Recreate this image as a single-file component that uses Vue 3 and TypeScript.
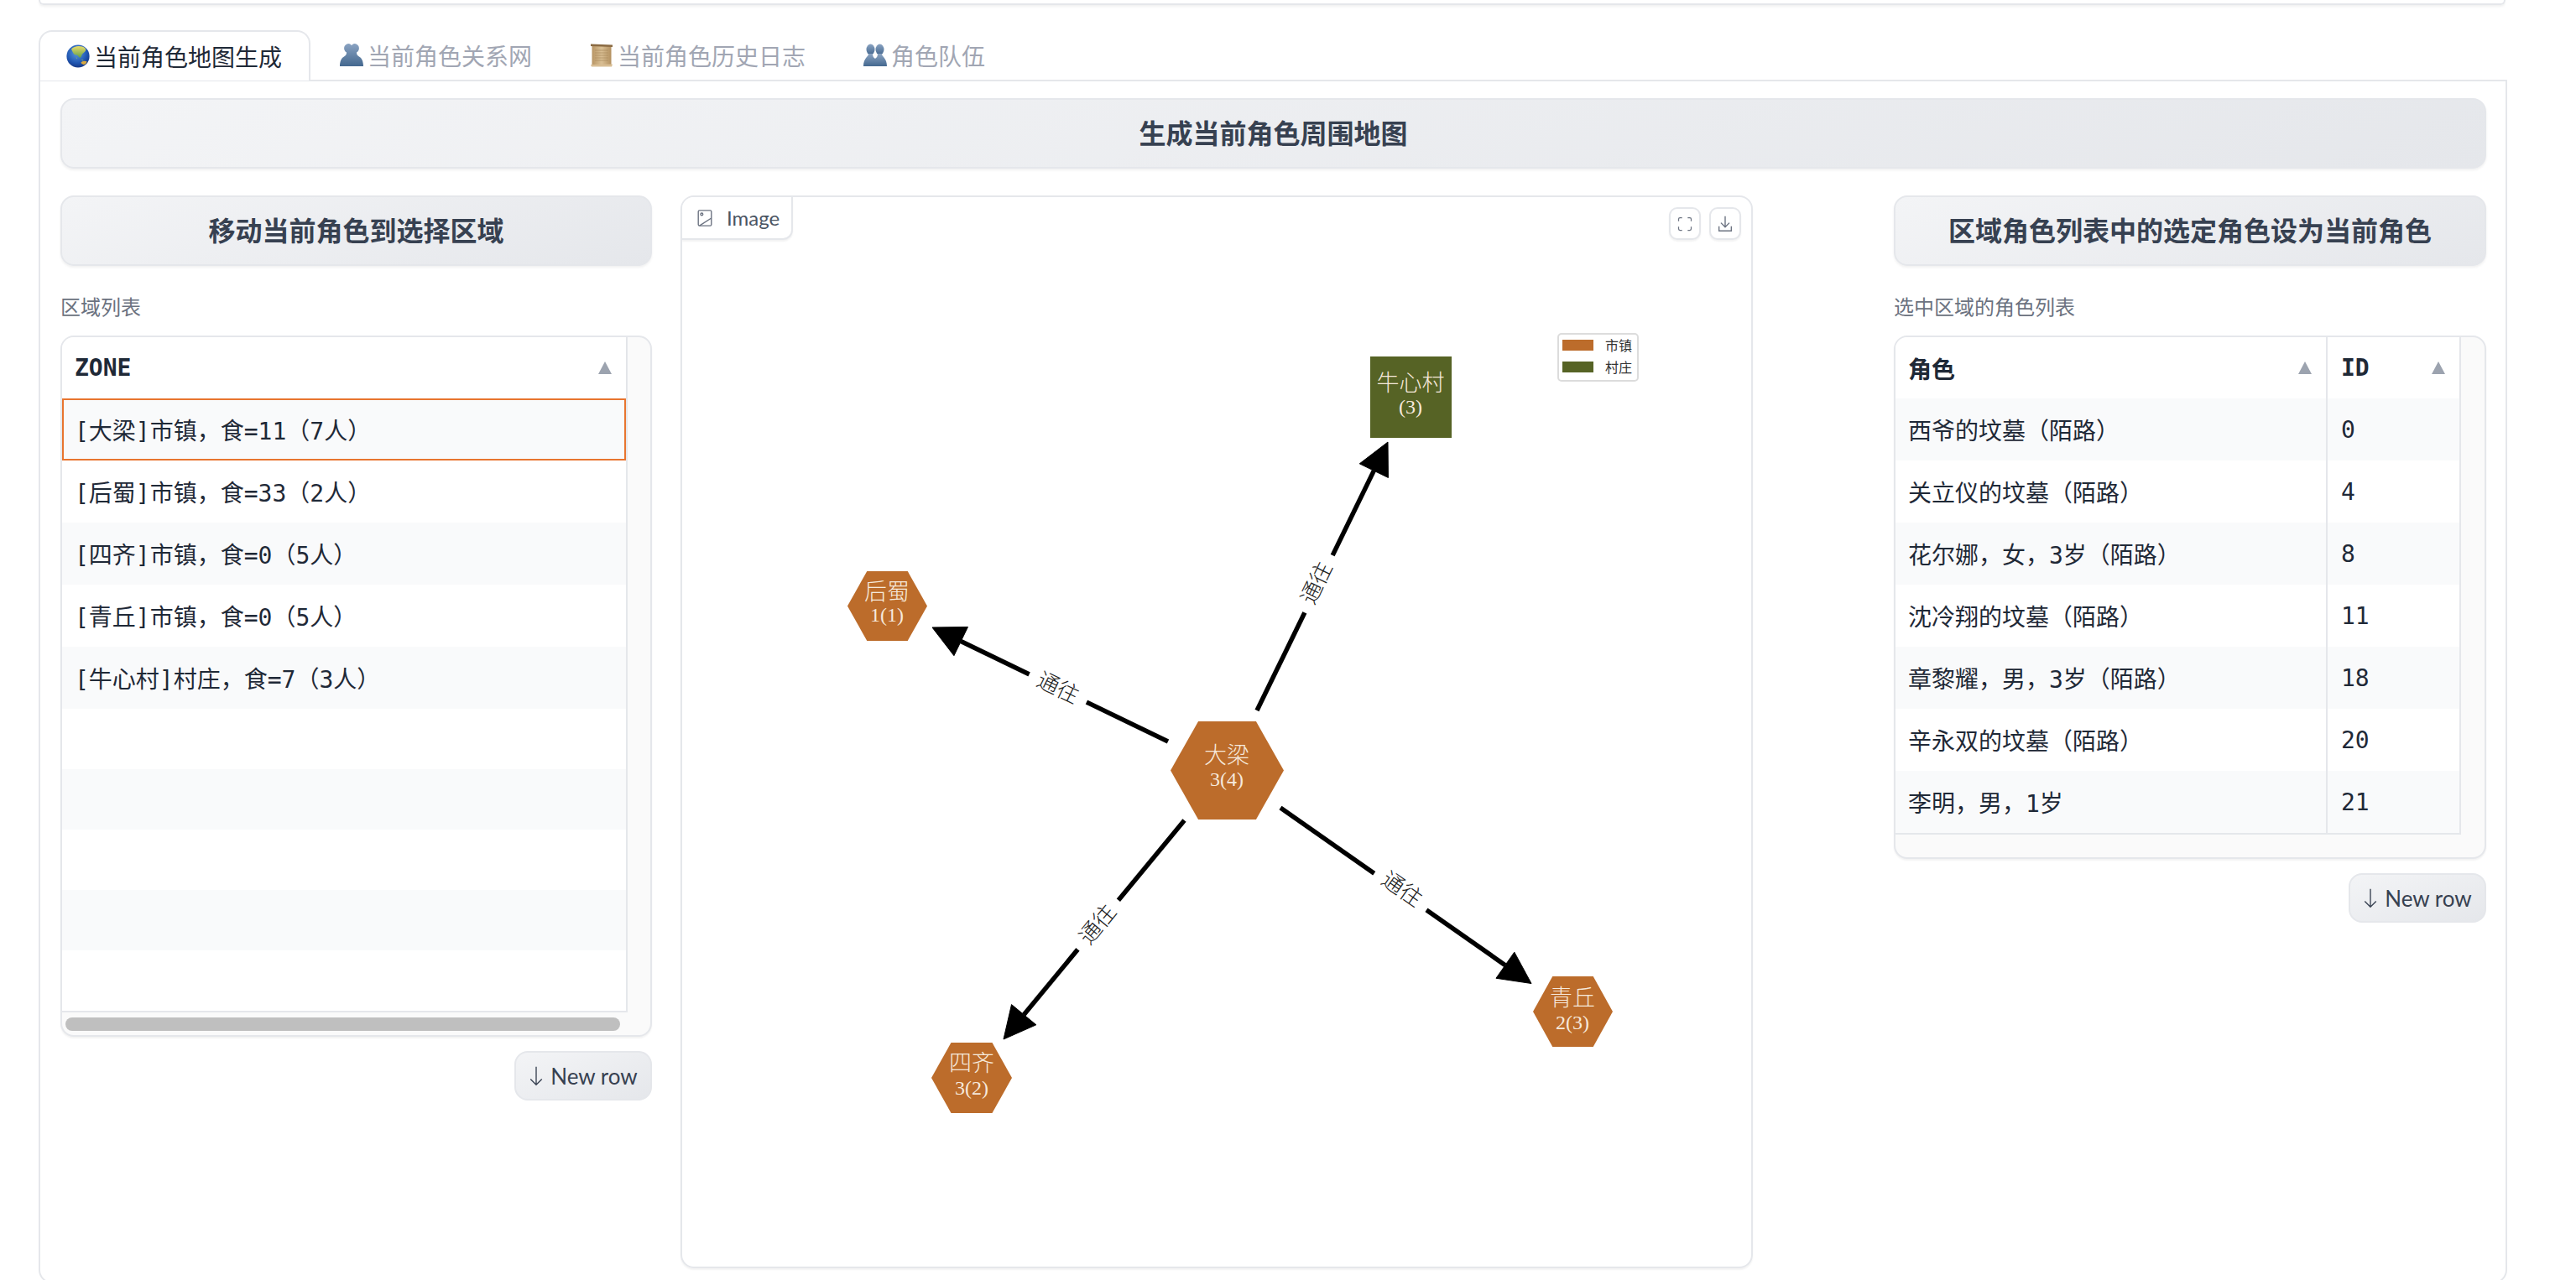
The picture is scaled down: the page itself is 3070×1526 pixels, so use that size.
<template>
  <div class="page">
    <div class="top-strip"></div>

    <div class="tabs">
      <div class="tab active">
        <svg class="emoji" viewBox="0 0 28 28">
          <defs>
            <radialGradient id="sea" cx="45%" cy="35%" r="70%">
              <stop offset="0" stop-color="#5b9be0" />
              <stop offset="0.65" stop-color="#1f55b0" />
              <stop offset="1" stop-color="#12307c" />
            </radialGradient>
            <linearGradient id="land" x1="0" y1="0" x2="0" y2="1">
              <stop offset="0" stop-color="#e8dc6a" />
              <stop offset="1" stop-color="#5f9e4a" />
            </linearGradient>
          </defs>
          <circle cx="14" cy="14" r="13.6" fill="url(#sea)" />
          <path d="M6 5.500C9.500 1.500 18 0.800 22.500 4.500C24.500 7 22 9 20 10.500C18 12 18.500 14.500 16.500 16C14.500 15 14 12.500 11.500 12.500C9 12.500 7.500 9 6 5.500Z" fill="url(#land)" />
          <path d="M17 17.500l2 1 1.500-.5-1 1.500zM11.500 14.500l1.500 2-.5 1z" fill="#8fb65a" />
          <path d="M17.500 21.500C19 19.500 23 19 24.500 20.500C24 22.500 22.500 24 20.500 24C19 23.500 18 23 17.500 21.500Z" fill="#d9a93f" />
        </svg>
        <span>当前角色地图生成</span>
      </div>
      <div class="tab">
        <svg class="emoji" viewBox="0 0 28 28">
          <defs>
            <linearGradient id="bust" x1="0" y1="0" x2="0" y2="1">
              <stop offset="0" stop-color="#8aa3c2" />
              <stop offset="1" stop-color="#44688f" />
            </linearGradient>
          </defs>
          <path d="M8 10.500a5 5.500 0 1 1 6-1.500a5 5.500 0 1 1 6 1.500C20 13 21 14 23 15.500C26 17 28 21 28 27H0C0 21 2 17 5 15.500C7 14 8 13 8 10.500Z" fill="url(#bust)" />
        </svg>
        <span>当前角色关系网</span>
      </div>
      <div class="tab">
        <svg class="emoji" viewBox="0 0 28 28">
          <defs>
            <linearGradient id="paper" x1="0" y1="0" x2="1" y2="0">
              <stop offset="0" stop-color="#b89564" />
              <stop offset="0.5" stop-color="#d9bf94" />
              <stop offset="1" stop-color="#b3905f" />
            </linearGradient>
          </defs>
          <rect x="2.500" y="2" width="23" height="24" fill="url(#paper)" />
          <path d="M1 0.500L27 1.500V4L1 3Z" fill="#8a6a42" />
          <path d="M1 25L27 24.500L26 27.500H2Z" fill="#d8bd93" />
          <path d="M6 8h16M6 11h16M6 14h16M6 17h16M6 20h16" stroke="#a98a5c" stroke-width="0.700" fill="none" />
        </svg>
        <span>当前角色历史日志</span>
      </div>
      <div class="tab">
        <svg class="emoji" viewBox="0 0 28 28">
          <ellipse cx="8.500" cy="7" rx="5" ry="6.500" fill="url(#bust)" />
          <ellipse cx="19.500" cy="7" rx="5" ry="6.500" fill="url(#bust)" />
          <path d="M6 12H11C11 16 13 17 14 18C15 17 17 16 17 12H22C22 16 28 17 28 27H0C0 17 6 16 6 12Z" fill="url(#bust)" />
        </svg>
        <span>角色队伍</span>
      </div>
    </div>

    <div class="panel">
      <button class="big-btn">生成当前角色周围地图</button>

      <div class="columns">
        <div class="col">
          <button class="big-btn">移动当前角色到选择区域</button>
          <div class="field-label">区域列表</div>
          <div class="table-box">
            <div class="sheet">
              <div class="row head">
                <div class="cell"><b>ZONE</b><i class="sort"></i></div>
              </div>
              <div
                v-for="(z, i) in zones"
                :key="i"
                class="row"
                :class="{ empty: !z, selected: i === 0 }"
              >
                <div class="cell">{{ z }}</div>
              </div>
            </div>
            <div class="track"><div class="thumb"></div></div>
          </div>
          <button class="new-row"><span class="arrow">
            <svg viewBox="0 0 20 30" width="18" height="27"><path d="M10 3V27M2.500 19.500L10 27L17.500 19.500" fill="none" stroke="#374151" stroke-width="1.500" /></svg>
          </span>New row</button>
        </div>

        <div class="image-box">
          <div class="image-label">
            <svg viewBox="0 0 24 24" width="22" height="22" fill="none" stroke="#6b7280" stroke-width="1.500">
              <rect x="3.500" y="2" width="17" height="20" rx="1.500" />
              <circle cx="8" cy="7" r="1.500" />
              <path d="M20.500 12L5 22" />
            </svg>
            Image
          </div>
          <div class="image-tools">
            <div class="tool">
              <svg viewBox="0 0 24 24" width="20" height="20" fill="none" stroke="#6b7280" stroke-width="1.500">
                <path d="M8 3H5a2 2 0 0 0-2 2v3m18 0V5a2 2 0 0 0-2-2h-3m0 18h3a2 2 0 0 0 2-2v-3M3 16v3a2 2 0 0 0 2 2h3" />
              </svg>
            </div>
            <div class="tool">
              <svg viewBox="0 0 24 24" width="22" height="22" fill="none" stroke="#6b7280" stroke-width="1.500">
                <path d="M12 2V16M6.500 10.500L12 16L17.500 10.500M4 15V21H20V15" />
              </svg>
            </div>
          </div>

          <svg class="map" viewBox="813 235 1274 1275" width="1274" height="1275">
            <g v-for="(e, i) in drawnEdges" :key="'e' + i">
              <line :x1="e.x1" :y1="e.y1" :x2="e.x2" :y2="e.y2" stroke="#000" stroke-width="5.5" />
              <polygon :points="e.head" fill="#000" stroke="#000" stroke-width="1" stroke-linejoin="round" />
              <g :transform="`translate(${e.lx} ${e.ly}) rotate(${e.angle})`">
                <rect x="-38" y="-17" width="76" height="34" fill="#fff" />
                <text class="edge-text" y="9" text-anchor="middle">通往</text>
              </g>
            </g>

            <g v-for="n in nodes" :key="n.name">
              <polygon :points="n.shape" :fill="n.fill" />
              <text class="node-name" :x="n.x" :y="n.y1 + 9" text-anchor="middle">{{ n.name }}</text>
              <text class="node-num" :x="n.x" :y="n.y2 + 7" text-anchor="middle">{{ n.num }}</text>
            </g>
          </svg>

          <div class="legend">
            <div class="legend-row"><i class="swatch town"></i>市镇</div>
            <div class="legend-row"><i class="swatch village"></i>村庄</div>
          </div>
        </div>

        <div class="col right">
          <button class="big-btn">区域角色列表中的选定角色设为当前角色</button>
          <div class="field-label">选中区域的角色列表</div>
          <div class="table-box">
            <div class="sheet">
              <div class="row head two">
                <div class="cell"><b>角色</b><i class="sort"></i></div>
                <div class="cell"><b>ID</b><i class="sort"></i></div>
              </div>
              <div v-for="p in people" :key="p.id" class="row two">
                <div class="cell">{{ p.name }}</div>
                <div class="cell">{{ p.id }}</div>
              </div>
            </div>
            <div class="track"></div>
          </div>
          <button class="new-row"><span class="arrow">
            <svg viewBox="0 0 20 30" width="18" height="27"><path d="M10 3V27M2.500 19.500L10 27L17.500 19.500" fill="none" stroke="#374151" stroke-width="1.500" /></svg>
          </span>New row</button>
        </div>
      </div>
    </div>
  </div>
</template>

<script setup lang="ts">
const zones = [
  "[大梁]市镇，食=11（7人）",
  "[后蜀]市镇，食=33（2人）",
  "[四齐]市镇，食=0（5人）",
  "[青丘]市镇，食=0（5人）",
  "[牛心村]村庄，食=7（3人）",
  "",
  "",
  "",
  "",
  "",
];

const people = [
  { name: "西爷的坟墓（陌路）", id: 0 },
  { name: "关立仪的坟墓（陌路）", id: 4 },
  { name: "花尔娜，女，3岁（陌路）", id: 8 },
  { name: "沈冷翔的坟墓（陌路）", id: 11 },
  { name: "章黎耀，男，3岁（陌路）", id: 18 },
  { name: "辛永双的坟墓（陌路）", id: 20 },
  { name: "李明，男，1岁", id: 21 },
];

const TOWN = "#bc6c2b";
const VILLAGE = "#566325";

// 六边形：中心、半宽、半高
const hexPoints = (cx: number, cy: number, w: number, h: number) => {
  const t = w * 0.51;
  return [
    [cx - w, cy],
    [cx - t, cy - h],
    [cx + t, cy - h],
    [cx + w, cy],
    [cx + t, cy + h],
    [cx - t, cy + h],
  ]
    .map((p) => p.join(","))
    .join(" ");
};

const nodes = [
  { name: "大梁", num: "3(4)", x: 1462, y1: 901, y2: 930, fill: TOWN, shape: hexPoints(1462.5, 918.5, 67.5, 58.5) },
  { name: "后蜀", num: "1(1)", x: 1057, y1: 706, y2: 734, fill: TOWN, shape: hexPoints(1057.5, 722.5, 47.5, 41.5) },
  { name: "四齐", num: "3(2)", x: 1158, y1: 1268, y2: 1298, fill: TOWN, shape: hexPoints(1158, 1285, 48, 42) },
  { name: "青丘", num: "2(3)", x: 1874, y1: 1190, y2: 1220, fill: TOWN, shape: hexPoints(1874.5, 1206, 47.5, 42) },
  { name: "牛心村", num: "(3)", x: 1681, y1: 457, y2: 486, fill: VILLAGE, shape: "1633,425 1730,425 1730,522 1633,522" },
];

const edges = [
  { from: [1498, 847], tip: [1654, 527], label: [1569, 695], angle: -64 },
  { from: [1392, 884], tip: [1111, 748], label: [1261, 820], angle: 25.8 },
  { from: [1411.5, 978], tip: [1196, 1239], label: [1308, 1102], angle: -50.5 },
  { from: [1526, 963], tip: [1825, 1172.5], label: [1671, 1060], angle: 35 },
];

const drawnEdges = edges.map((e) => {
  const dx = e.tip[0] - e.from[0];
  const dy = e.tip[1] - e.from[1];
  const len = Math.hypot(dx, dy);
  const ux = dx / len;
  const uy = dy / len;
  const bx = e.tip[0] - ux * 38;
  const by = e.tip[1] - uy * 38;
  const head = [
    [e.tip[0], e.tip[1]],
    [bx - uy * 19, by + ux * 19],
    [bx + uy * 19, by - ux * 19],
  ]
    .map((p) => p.join(","))
    .join(" ");
  return {
    x1: e.from[0],
    y1: e.from[1],
    x2: bx,
    y2: by,
    head,
    lx: e.label[0],
    ly: e.label[1],
    angle: e.angle,
  };
});
</script>

<style scoped>
.page {
  width: 3070px;
  height: 1526px;
  overflow: hidden;
  padding: 0 82px 0 46px;
  box-sizing: border-box;
  font-family: "Noto Sans CJK SC", "Noto Sans", sans-serif;
  color: #1f2937;
}
.top-strip {
  height: 4px;
  margin-right: 2px;
  border: 2px solid #e5e7eb;
  border-top: none;
  border-radius: 0 0 14px 14px;
  box-shadow: 0 2px 3px rgba(0, 0, 0, 0.06);
}
.tabs {
  display: flex;
  margin-top: 30px;
  height: 60px;
  position: relative;
  z-index: 1;
}
.tab {
  display: flex;
  align-items: center;
  gap: 5px;
  padding: 0 34px 0 35px;
  font-size: 28px;
  line-height: 1;
  color: #a1a6b3;
  white-space: nowrap;
}
.tab.active {
  padding-left: 31px;
  color: #1f2937;
  background: #fff;
  border: 2px solid #e5e7eb;
  border-bottom: none;
  border-radius: 16px 16px 0 0;
  padding-right: 32px;
  height: 60px;
  box-sizing: border-box;
}
.emoji {
  width: 28px;
  height: 28px;
  flex: none;
}
.panel {
  height: 1435px;
  margin-top: -1px;
  box-sizing: border-box;
  border: 2px solid #e5e7eb;
  border-radius: 0 0 16px 16px;
  padding: 20px 23px 0 24px;
}
button {
  font-family: inherit;
  cursor: pointer;
}
.big-btn {
  display: block;
  width: 100%;
  height: 84px;
  box-sizing: border-box;
  padding: 0 0 4px;
  border: 2px solid #e5e7eb;
  border-radius: 16px;
  background: linear-gradient(160deg, #f3f4f6, #e5e7eb);
  box-shadow: 0 2px 3px rgba(0, 0, 0, 0.06);
  font-size: 32px;
  font-weight: 700;
  color: #374151;
}
.columns {
  display: flex;
  gap: 34px;
  margin-top: 32px;
  align-items: flex-start;
}
.col {
  width: 705px;
  flex: none;
  display: flex;
  flex-direction: column;
}
.col.right {
  margin-left: auto;
  width: 706px;
}
.field-label {
  margin-top: 30px;
  height: 36px;
  line-height: 36px;
  font-size: 24px;
  color: #6b7280;
}
.table-box {
  margin-top: 17px;
  border: 2px solid #e5e7eb;
  border-radius: 16px;
  overflow: hidden;
  background: #fafafa;
  box-shadow: 0 2px 2px rgba(0, 0, 0, 0.05);
}
.sheet {
  width: 674px;
  box-sizing: border-box;
  background: #fff;
  border-right: 2px solid #e5e7eb;
  border-bottom: 2px solid #e5e7eb;
  font-family: "DejaVu Sans Mono", "Noto Sans CJK SC", monospace;
  font-size: 28px;
}
.row {
  height: 74px;
  display: grid;
  grid-template-columns: 1fr;
}
.row.two {
  grid-template-columns: 513px 1fr;
}
.row.two .cell + .cell {
  border-left: 2px solid #e5e7eb;
  padding-left: 16px;
}
.row.head {
  height: 73px;
  box-shadow: 0 1px 2px rgba(0, 0, 0, 0.04);
}
.row.empty {
  height: 72px;
}
.row:nth-child(even) {
  background: #f9fafb;
}
.row.selected {
  box-shadow: inset 0 0 0 2px #e8752f;
}
.cell {
  display: flex;
  align-items: center;
  justify-content: space-between;
  padding: 0 17px 0 15px;
  white-space: nowrap;
  min-width: 0;
}
.cell b {
  font-weight: 700;
}
.sort {
  width: 0;
  height: 0;
  border-left: 8.5px solid transparent;
  border-right: 8.5px solid transparent;
  border-bottom: 15px solid #9ca3af;
}
.track {
  height: 27px;
  box-sizing: border-box;
  padding: 6px 4px 0;
}
.thumb {
  width: 661px;
  height: 16px;
  border-radius: 8px;
  background: #bfbfbf;
}
.new-row {
  align-self: flex-end;
  margin-top: 17px;
  width: 164px;
  height: 59px;
  padding: 0;
  display: flex;
  align-items: center;
  justify-content: center;
  gap: 8px;
  border: 2px solid #e5e7eb;
  border-radius: 16px;
  background: linear-gradient(160deg, #f3f4f6, #e5e7eb);
  font-family: Lato, "Noto Sans", sans-serif;
  font-size: 26px;
  color: #374151;
}
.arrow {
  display: flex;
}
.image-box {
  position: relative;
  width: 1278px;
  height: 1279px;
  flex: none;
  box-sizing: border-box;
  border: 2px solid #e5e7eb;
  border-radius: 16px;
  box-shadow: 0 2px 2px rgba(0, 0, 0, 0.05);
  overflow: hidden;
}
.map {
  display: block;
}
.image-label {
  position: absolute;
  left: 0;
  top: 0;
  width: 132px;
  height: 51px;
  box-sizing: border-box;
  display: flex;
  align-items: center;
  gap: 15px;
  padding-left: 16px;
  background: #fff;
  border-right: 2px solid #e5e7eb;
  border-bottom: 2px solid #e5e7eb;
  border-radius: 0 0 12px 0;
  box-shadow: 0 2px 2px rgba(0, 0, 0, 0.05);
  font-family: Lato, "Noto Sans", sans-serif;
  font-size: 24px;
  color: #4b5563;
}
.image-tools {
  position: absolute;
  top: 12px;
  right: 12px;
  display: flex;
  gap: 10px;
}
.tool {
  width: 38px;
  height: 39px;
  box-sizing: border-box;
  display: flex;
  align-items: center;
  justify-content: center;
  border: 2px solid #e5e7eb;
  border-radius: 10px;
  background: #fff;
  box-shadow: 0 2px 2px rgba(0, 0, 0, 0.05);
}
.legend {
  position: absolute;
  left: 1043px;
  top: 162px;
  width: 97px;
  height: 58px;
  box-sizing: border-box;
  border: 2px solid #dcdcdc;
  border-radius: 5px;
  padding: 0 0 0 4px;
  font-size: 16px;
  line-height: 26px;
  color: #333;
}
.legend-row {
  display: flex;
  align-items: center;
  gap: 14px;
  height: 26px;
}
.legend-row:first-child {
  margin-top: -1px;
}
.swatch {
  width: 37px;
  height: 13px;
}
.swatch.town {
  background: #bc6c2b;
}
.swatch.village {
  background: #566325;
}
.edge-text {
  font-family: "Noto Sans CJK SC", sans-serif;
  font-weight: 300;
  font-size: 26px;
  fill: #222;
}
.node-name {
  font-family: "Noto Sans CJK SC", sans-serif;
  font-weight: 300;
  font-size: 27px;
  fill: #f6e9dc;
}
.node-num {
  font-family: "Liberation Serif", serif;
  font-size: 24px;
  fill: #f6e9dc;
}
</style>

<style>
html,
body {
  margin: 0;
  background: #fff;
  overflow: hidden;
}
</style>
